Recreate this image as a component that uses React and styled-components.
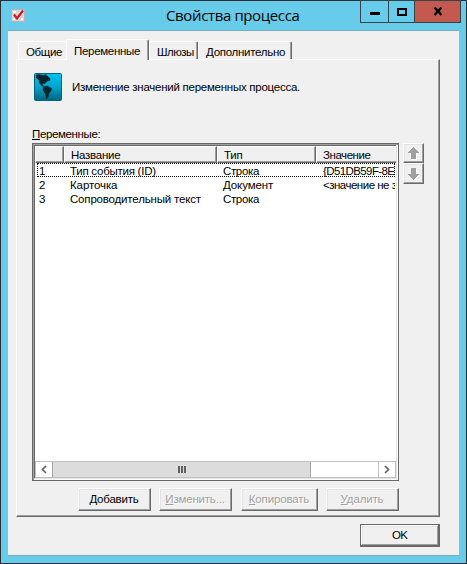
import React from 'react';
import styled, { createGlobalStyle, css } from 'styled-components';

const GlobalStyle = createGlobalStyle`
  *, *::before, *::after { box-sizing: border-box; }
  body { margin: 0; overflow: hidden; }
`;

const Dialog = styled.div`
  width: 467px;
  height: 564px;
  padding: 0 7px 7px;
  border: 1px solid #2d2d32;
  background: #67cbea;
  color: #000;
  font: 11.5px/14px "Liberation Sans", Arial, sans-serif;
  display: flex;
  flex-direction: column;
  user-select: none;
`;

const TitleBar = styled.header`
  height: 29px;
  flex: none;
  display: flex;
  position: relative;
`;

const AppIcon = styled.svg`
  margin: 8px 0 0 3px;
  width: 14px;
  height: 13px;
`;

const Title = styled.h1`
  margin: 0 0 0 141px;
  width: 195px;
  font: 400 15px/29px "Open Sans", "Noto Sans", sans-serif;
  letter-spacing: -0.37px;
  white-space: nowrap;
`;

const Captions = styled.div`
  position: absolute;
  top: -1px;
  left: 352px;
  display: flex;
`;

const Caption = styled.button`
  width: ${(p) => p.$width}px;
  height: 23px;
  padding: 0;
  border: 1px solid #35424a;
  margin-right: -1px;
  background: ${(p) => (p.$close ? '#c35a50' : '#67cbea')};
  display: flex;
  align-items: center;
  justify-content: center;
`;

const Client = styled.main`
  flex: 1;
  border-top: 1px solid #79aabd;
  border-bottom: 1px solid #79aabd;
  background: #f0f0f0;
  padding: 8px 0 0 8px;
`;

const TabStrip = styled.nav`
  height: 20px;
  padding-left: 2px;
  display: flex;
  align-items: flex-end;
`;

const Tab = styled.div`
  width: ${(p) => p.$width}px;
  height: ${(p) => (p.$active ? 21 : 18)}px;
  padding: ${(p) => (p.$active ? '4px 0 0 7px' : '3px 0 0 7px')};
  margin-bottom: ${(p) => (p.$active ? -1 : 0)}px;
  background: #f0f0f0;
  border: solid #fff;
  border-width: 1px 0 0 1px;
  border-radius: 2px 2px 0 0;
  ${(p) => !p.$joined && css`
    border-right: 1px solid #696969;
    box-shadow: inset -1px 0 #a0a0a0;
  `}
  position: relative;
  z-index: ${(p) => (p.$active ? 1 : 0)};
  white-space: nowrap;
`;

const Page = styled.section`
  width: 424px;
  height: 458px;
  padding: 13px 0 0 15px;
  border: 1px solid;
  border-color: #fff #696969 #696969 #fff;
  box-shadow: inset -1px -1px #a0a0a0;
`;

const Intro = styled.div`
  height: 28px;
  padding-left: 2px;
  display: flex;
  align-items: center;
  gap: 10px;
`;

const Text = styled.span`
  display: inline-block;
  letter-spacing: ${(p) => p.$spacing || 0}px;
  white-space: pre;
`;

const Mnemonic = styled.span`
  text-decoration: underline;
  text-underline-offset: 1px;
  text-decoration-thickness: 1px;
`;

const FieldLabel = styled.div`
  height: 16px;
  margin: 26px 0 0;
`;

const ListArea = styled.div`
  display: flex;
  gap: 4px;
`;

const ListBox = styled.div`
  width: 367px;
  height: 338px;
  border: 1px solid #696969;
  background: #fff;
  padding: 2px;
  box-shadow: inset 1px 1px #a0a0a0, inset -1px -1px #fff, inset -2px -2px #e3e3e3, inset 2px 2px #696969;
  display: flex;
  flex-direction: column;
`;

const columns = css`
  display: grid;
  grid-template-columns: 29px 153px 99px 80px;
`;

const HeaderRow = styled.div`
  ${columns}
  height: 17px;
  flex: none;
`;

const HeaderCell = styled.div`
  overflow: hidden;
  padding: 1px 0 0 6px;
  background: #f0f0f0;
  border: 1px solid;
  border-color: #fff #696969 #696969 #fff;
  box-shadow: inset -1px -1px #a0a0a0;
  &:last-child {
    border-right: 0;
    box-shadow: inset 0 -1px #a0a0a0;
  }
`;

const Rows = styled.div`
  flex: 1;
  padding: 0 0 0 2px;
`;

const Row = styled.div`
  ${columns}
  grid-template-columns: 31px 153px 100px 74px;
  width: 358px;
  height: 14px;
  line-height: 16px;
  ${(p) => p.$focused && css`
    outline: 1px dotted #000;
    outline-offset: -1px;
  `}
`;

const Cell = styled.div`
  height: 16px;
  padding-left: 2px;
  overflow: hidden;
`;

const ScrollBar = styled.div`
  height: 17px;
  flex: none;
  display: flex;
  border: 1px solid #c0c0c0;
`;

const ScrollButton = styled.div`
  width: 16px;
  display: grid;
  place-items: center;
`;

const ScrollThumb = styled.div`
  width: 259px;
  background: #dcdcdc;
  border: solid #a6a6a6;
  border-width: 0 1px;
  display: flex;
  align-items: center;
  justify-content: center;
  gap: 1px;
`;

const Grip = styled.i`
  width: 2px;
  height: 7px;
  background: #606060;
`;

const ScrollTrack = styled.div`
  flex: 1;
  border-right: 1px solid #c0c0c0;
`;

const raised = css`
  background: #f0f0f0;
  border: 1px solid;
  border-color: #fff #696969 #696969 #fff;
  box-shadow: inset -1px -1px #a0a0a0, inset 1px 1px #e3e3e3;
`;

const OrderButtons = styled.div`
  display: flex;
  flex-direction: column;
`;

const OrderButton = styled.button`
  ${raised}
  width: 21px;
  height: ${(p) => p.$height}px;
  padding: 0;
  display: grid;
  place-items: center;
`;

const Actions = styled.div`
  display: flex;
  gap: 8px;
  margin: 7px 0 0 46px;
`;

const PushButton = styled.button`
  ${raised}
  width: ${(p) => p.$width || 73}px;
  height: 23px;
  margin-left: ${(p) => p.$offset || 0}px;
  padding: 0 1px 1px 0;
  font: inherit;
  color: #000;
  ${(p) => p.disabled && css`
    color: #a0a0a0;
    text-shadow: 1px 1px #fff;
  `}
  ${(p) => p.$default && css`
    border-color: #696969;
    box-shadow: inset -1px -1px #696969, inset 1px 1px #fff, inset -2px -2px #a0a0a0, inset 2px 2px #e3e3e3;
  `}
`;

const Footer = styled.footer`
  display: flex;
  padding: 7px 0 0 344px;
`;

const tabs = [
  { label: 'Общие', width: 48, joined: true, spacing: -0.35 },
  { label: 'Переменные', width: 83, active: true, spacing: -0.3 },
  { label: 'Шлюзы', width: 49, spacing: -0.55 },
  { label: 'Дополнительно', width: 94, spacing: -0.28 },
];

const rows = [
  ['1', 'Тип события (ID)', 'Строка', '{D51DB59F-8E'],
  ['2', 'Карточка', 'Документ', '<значение не з'],
  ['3', 'Сопроводительный текст', 'Строка', ''],
];
const rowSpacing = [
  [0, -0.25, -0.35, -0.6],
  [0, -0.1, -0.1, -0.5],
  [0, -0.18, -0.35, 0],
];

function Arrow({ down }) {
  return (
    <svg width="13" height="13" viewBox="0 0 13 13" shapeRendering="crispEdges">
      <g transform={down ? 'matrix(1 0 0 -1 0 13)' : undefined}>
        <path d="M6 0h1v1h1v1h1v1h1v1h1v1h1v1H9v6H4V6H1V5h1V4h1V3h1V2h1V1h1z" fill="#fff" transform={down ? 'translate(1 -1)' : 'translate(1 1)'} />
        <path d="M6 0h1v1h1v1h1v1h1v1h1v1h1v1H9v6H4V6H1V5h1V4h1V3h1V2h1V1h1z" fill="#a0a0a0" />
      </g>
    </svg>
  );
}

function Chevron({ right }) {
  return (
    <svg width="8" height="9" viewBox="0 0 8 9">
      <path d={right ? 'M2 1L5.5 4.5L2 8' : 'M6 1L2.5 4.5L6 8'} fill="none" stroke="#606060" strokeWidth="1.6" />
    </svg>
  );
}

function Globe() {
  return (
    <svg width="28" height="28" viewBox="0 0 28 28">
      <defs>
        <linearGradient id="sea" x1="0" y1="0" x2="0" y2="1">
          <stop offset="0" stopColor="#00c4f2" />
          <stop offset=".5" stopColor="#00a5cb" />
          <stop offset="1" stopColor="#00647d" />
        </linearGradient>
      </defs>
      <rect x=".5" y=".5" width="27" height="27" rx="1" fill="url(#sea)" stroke="#00667f" />
      <path d="M2 2L5 1.5L9 2.5L12 1.5L14 4L16 5.5L16 7.5L13 8L11 10.5L8.5 10L8.5 12L10 13.5L8 13L5.5 10L5 7L2.5 5ZM9.5 14L13 13L17.5 15.5L17 18L15 20L14 24L12.5 26L11.5 21L9 17Z" fill="#02242e" stroke="#02242e" strokeWidth=".6" />
    </svg>
  );
}

export default function App() {
  return (
    <>
      <GlobalStyle />
      <Dialog>
        <TitleBar>
          <AppIcon viewBox="0 0 14 13">
            <path d="M.5 .5h13v12h-13z" fill="#d8d8d8" stroke="#b4b4b4" />
            <path d="M2 2h3v2H2zM8 3h4v1H8zM2 9h2v2H2zM10 9h2v2h-2z" fill="#f6f6f6" />
            <path d="M3 5.5L6 9.5L12 1.5" fill="none" stroke="#d01822" strokeWidth="2.2" />
          </AppIcon>
          <Title>Свойства процесса</Title>
          <Captions>
            <Caption $width={29} aria-label="Свернуть">
              <svg width="10" height="13"><path d="M0 7h10v3H0z" /></svg>
            </Caption>
            <Caption $width={27} aria-label="Развернуть">
              <svg width="10" height="8"><path d="M1 1h8v6H1z" fill="none" stroke="#000" strokeWidth="2" /></svg>
            </Caption>
            <Caption $width={47} $close aria-label="Закрыть">
              <svg width="10" height="9"><path d="M1.5 .5L8.5 8M8.5 .5L1.5 8" stroke="#000" strokeWidth="2.4" /></svg>
            </Caption>
          </Captions>
        </TitleBar>
        <Client>
          <TabStrip>
            {tabs.map((t) => (
              <Tab key={t.label} $width={t.width} $active={t.active} $joined={t.joined}>
                <Text $spacing={t.spacing}>{t.label}</Text>
              </Tab>
            ))}
          </TabStrip>
          <Page>
            <Intro>
              <Globe />
              <Text $spacing={-0.26}>Изменение значений переменных процесса.</Text>
            </Intro>
            <FieldLabel>
              <Text $spacing={-0.36}><Mnemonic>П</Mnemonic>еременные:</Text>
            </FieldLabel>
            <ListArea>
              <ListBox>
                <HeaderRow>
                  <HeaderCell />
                  <HeaderCell><Text $spacing={-0.25}>Название</Text></HeaderCell>
                  <HeaderCell><Text $spacing={-0.2}>Тип</Text></HeaderCell>
                  <HeaderCell><Text $spacing={-0.45}>Значение</Text></HeaderCell>
                </HeaderRow>
                <Rows>
                  {rows.map((row, r) => (
                    <Row key={row[0]} $focused={r === 0}>
                      {row.map((value, c) => (
                        <Cell key={c}><Text $spacing={rowSpacing[r][c]}>{value}</Text></Cell>
                      ))}
                    </Row>
                  ))}
                </Rows>
                <ScrollBar>
                  <ScrollButton><Chevron /></ScrollButton>
                  <ScrollThumb><Grip /><Grip /><Grip /></ScrollThumb>
                  <ScrollTrack />
                  <ScrollButton><Chevron right /></ScrollButton>
                </ScrollBar>
              </ListBox>
              <OrderButtons>
                <OrderButton $height={20} disabled aria-label="Вверх"><Arrow /></OrderButton>
                <OrderButton $height={21} disabled aria-label="Вниз"><Arrow down /></OrderButton>
              </OrderButtons>
            </ListArea>
            <Actions>
              <PushButton><Text $spacing={-0.2}><Mnemonic>Д</Mnemonic>обавить</Text></PushButton>
              <PushButton disabled><Text $spacing={-0.2}><Mnemonic>И</Mnemonic>зменить...</Text></PushButton>
              <PushButton disabled $width={77} $offset={1}><Text $spacing={-0.15}><Mnemonic>К</Mnemonic>опировать</Text></PushButton>
              <PushButton disabled><Text $spacing={-0.15}><Mnemonic>У</Mnemonic>далить</Text></PushButton>
            </Actions>
          </Page>
          <Footer>
            <PushButton $default $width={80}><Text $spacing={-0.8}>OK</Text></PushButton>
          </Footer>
        </Client>
      </Dialog>
    </>
  );
}
